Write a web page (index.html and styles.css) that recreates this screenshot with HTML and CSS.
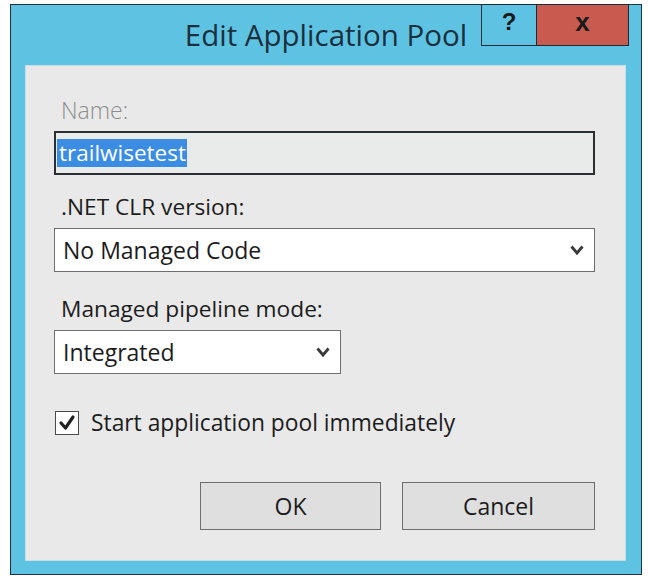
FILE: index.html
```html
<!DOCTYPE html>
<html>
<head>
<meta charset="utf-8">
<link rel="stylesheet" href="styles.css">
</head>
<body>
<div class="window">
  <div class="titlebar">
    <div class="title">Edit Application Pool</div>
    <div class="controls">
      <div class="ctl help">?</div>
      <div class="ctl close">x</div>
    </div>
  </div>
  <div class="panel">
    <div class="label muted">Name:</div>
    <div class="field name-field"><span class="sel">trailwisetest</span></div>
    <div class="label gap1">.NET CLR version:</div>
    <div class="field select wide">
      <span>No Managed Code</span>
      <svg class="chev" width="16" height="12" viewBox="0 0 16 12"><path d="M2.5 2.5 L8 9 L13.5 2.5" fill="none" stroke="#3a3a3a" stroke-width="2.8" stroke-linejoin="miter"/></svg>
    </div>
    <div class="label gap2">Managed pipeline mode:</div>
    <div class="field select narrow">
      <span>Integrated</span>
      <svg class="chev" width="16" height="12" viewBox="0 0 16 12"><path d="M2.5 2.5 L8 9 L13.5 2.5" fill="none" stroke="#3a3a3a" stroke-width="2.8" stroke-linejoin="miter"/></svg>
    </div>
    <div class="check-row">
      <div class="checkbox">
        <svg width="20" height="20" viewBox="0 0 20 20"><path d="M4 10 L8.5 15 L16 4" fill="none" stroke="#222" stroke-width="3.2" stroke-linecap="round" stroke-linejoin="round"/></svg>
      </div>
      <span>Start application pool immediately</span>
    </div>
    <div class="buttons">
      <div class="btn ok">OK</div>
      <div class="btn cancel">Cancel</div>
    </div>
  </div>
</div>
</body>
</html>
```
FILE: styles.css
```css
* { box-sizing: border-box; }
html, body { margin: 0; padding: 0; background: #ffffff; }
body {
  font-family: "Open Sans", "Noto Sans", sans-serif;
  color: #1c1c1c;
}
.window {
  margin: 4px 0 0 10px;
  width: 632px;
  height: 571px;
  border: 1px solid #1d3440;
  background: #5ec3e3;
  display: flex;
  flex-direction: column;
}
.titlebar {
  height: 60px;
  display: grid;
}
.title {
  grid-area: 1 / 1;
  justify-self: center;
  align-self: start;
  margin-top: 10px;
  font-size: 29.5px;
  line-height: 40px;
  color: #1b2f3d;
}
.controls {
  grid-area: 1 / 1;
  justify-self: end;
  align-self: start;
  display: flex;
  margin-top: -1px;
  margin-right: 12px;
  height: 42px;
  border: 1px solid #1d2c34;
}
.ctl {
  display: flex;
  align-items: center;
  justify-content: center;
  font-family: "Liberation Sans", Arial, sans-serif;
  font-weight: bold;
  color: #1a1a1a;
  height: 100%;
}
.help {
  width: 55px;
  background: #5ec3e3;
  border-right: 1px solid #1d2c34;
  font-size: 24px;
  padding-bottom: 6px;
}
.close {
  width: 91px;
  background: #c85a4f;
  font-size: 26px;
  padding-bottom: 6px;
}
.panel {
  flex: 1;
  margin: 0 15px 13px 14px;
  background: #e9e9e9;
  border: 1px solid #c9dfe7;
  padding: 30px 30px 0 28px;
  display: flex;
  flex-direction: column;
  align-items: flex-start;
}
.label {
  font-size: 22.7px;
  line-height: 28px;
  padding-left: 7px;
}
.muted { color: #8d8d8d; font-weight: 300; font-size: 23px; }
.gap1 { margin-top: 18px; }
.gap2 { margin-top: 23px; }
.field {
  margin-top: 7px;
  height: 44px;
  display: flex;
  align-items: center;
  font-size: 23px;
}
.name-field {
  width: 541px;
  border: 2px solid #2c2f31;
  background: #e9eaea;
  padding-left: 1px;
}
.sel {
  background: #3b8de4;
  color: #ffffff;
  font-size: 22.5px;
  line-height: 28px;
  padding: 0 1px 0 2px;
}
.select {
  background: #ffffff;
  border: 1.5px solid #6f6f6f;
  padding: 0 9px 0 8px;
  justify-content: space-between;
}
.wide { width: 541px; }
.narrow { width: 287px; }
.chev { display: block; }
.check-row {
  margin-top: 35px;
  display: flex;
  align-items: center;
  gap: 12px;
  font-size: 22.8px;
  line-height: 28px;
  padding-left: 1px;
}
.checkbox {
  width: 24px;
  height: 24px;
  border: 1.5px solid #4a4a4a;
  background: #ffffff;
  display: flex;
  align-items: center;
  justify-content: center;
}
.buttons {
  align-self: stretch;
  margin-top: 45px;
  display: flex;
  justify-content: flex-end;
  gap: 21px;
}
.btn {
  height: 48px;
  background: #dfdfdf;
  border: 1.5px solid #6e6e6e;
  display: flex;
  align-items: center;
  justify-content: center;
  font-size: 23px;
}
.ok { width: 181px; }
.cancel { width: 193px; }
```
